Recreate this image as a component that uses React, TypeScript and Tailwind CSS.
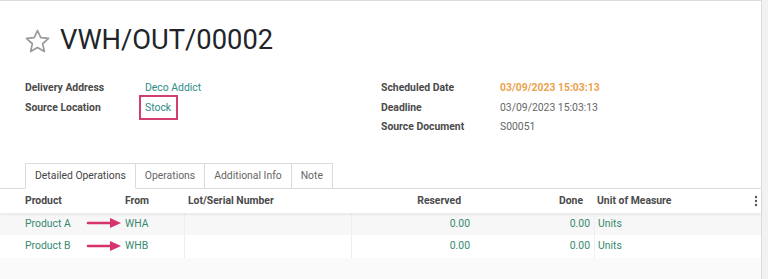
import React from "react";

const Arrow = () => (
  <svg
    className="absolute left-[-39px] top-1/2 -translate-y-1/2"
    width="36"
    height="12"
    viewBox="0 0 36 12"
  >
    <line x1="2" y1="6" x2="27" y2="6" stroke="#d6336c" strokeWidth="2.6" strokeLinecap="round" />
    <polygon points="24,1 35,6 24,11" fill="#d6336c" />
  </svg>
);

const Star = () => (
  <svg width="27" height="27" viewBox="0 0 24 24" className="mr-[9px]">
    <polygon
      points="12,2.2 14.9,8.6 21.8,9.3 16.6,14 18.1,20.9 12,17.4 5.9,20.9 7.4,14 2.2,9.3 9.1,8.6"
      fill="none"
      stroke="#9a9a9a"
      strokeWidth="1.5"
      strokeLinejoin="round"
    />
  </svg>
);

const cols = "grid-cols-[120px_65px_167px_123px_120px_1fr_10px]";

export default function App() {
  const font = { fontFamily: "Roboto, 'Noto Sans', sans-serif" };
  const rows = [
    { p: "Product A", f: "WHA", bg: "bg-[#f7f7f7]" },
    { p: "Product B", f: "WHB", bg: "bg-white" },
  ];
  return (
    <div className="flex h-[279px] w-[768px] bg-[#f2f2f2] overflow-hidden" style={font}>
      <div className="flex w-[762px] flex-col border-t border-r border-[#dcdcdc] bg-white">
        {/* Title */}
        <div className="flex h-[54px] items-center pl-[24px] pt-[26px]">
          <Star />
          <span className="text-[27.3px] leading-none text-[#212529]">VWH/OUT/00002</span>
        </div>

        {/* Fields */}
        <div className="mt-[23px] flex text-[10.4px] leading-[19.5px]">
          <div className="flex w-[381px] flex-col pl-[25px]">
            <div className="flex">
              <span className="w-[120px] font-bold text-[#4a4a4a]">Delivery Address</span>
              <span className="text-[#2b8c87]">Deco Addict</span>
            </div>
            <div className="flex">
              <span className="w-[120px] font-bold text-[#4a4a4a]">Source Location</span>
              <span className="relative text-[#2b8c87]">
                Stock
                <span className="absolute left-[-6px] top-[-3px] h-[25px] w-[39px] border-2 border-[#d23f73]" />
              </span>
            </div>
          </div>
          <div className="flex flex-col">
            <div className="flex">
              <span className="w-[119px] font-bold text-[#4a4a4a]">Scheduled Date</span>
              <span className="font-bold text-[#eaa24d]">03/09/2023 15:03:13</span>
            </div>
            <div className="flex">
              <span className="w-[119px] font-bold text-[#4a4a4a]">Deadline</span>
              <span className="text-[#666]">03/09/2023 15:03:13</span>
            </div>
            <div className="flex">
              <span className="w-[119px] font-bold text-[#4a4a4a]">Source Document</span>
              <span className="text-[#666]">S00051</span>
            </div>
          </div>
        </div>

        {/* Tabs */}
        <div className="mt-[26px] flex h-[26px] border-b border-[#dcdcdc] pl-[25px] text-[10.4px]">
          <div className="mb-[-1px] flex items-center border border-b-white border-[#dcdcdc] bg-white px-[9px] text-[#444]">
            Detailed Operations
          </div>
          <div className="flex items-center border-t border-r border-[#dcdcdc] px-[9px] text-[#666]">Operations</div>
          <div className="flex items-center border-t border-r border-[#dcdcdc] px-[9px] text-[#666]">Additional Info</div>
          <div className="flex items-center border-t border-r border-[#dcdcdc] px-[9px] text-[#666]">Note</div>
        </div>

        {/* Table */}
        <div className="flex flex-1 flex-col bg-[#fafafa] text-[10.4px]">
          <div className={`relative z-10 grid h-[24px] ${cols} items-center bg-white font-bold text-[#4a4a4a] shadow-[0_2px_3px_rgba(0,0,0,0.06)]`}>
            <span className="pl-[25px]">Product</span>
            <span className="pl-[5px]">From</span>
            <span className="pl-[3px]">Lot/Serial Number</span>
            <span className="pr-[14px] text-right">Reserved</span>
            <span className="pr-[12px] text-right">Done</span>
            <span className="pl-[2px]">Unit of Measure</span>
            <span className="flex justify-center">
              <svg width="4" height="12" viewBox="0 0 4 12">
                <circle cx="2" cy="2" r="1.2" fill="#555" />
                <circle cx="2" cy="6" r="1.2" fill="#555" />
                <circle cx="2" cy="10" r="1.2" fill="#555" />
              </svg>
            </span>
          </div>
          {rows.map((r) => (
            <div
              key={r.p}
              className={`grid h-[22.5px] ${cols} items-center text-[#38896f] ${r.bg}`}
            >
              <span className="pl-[25px]">{r.p}</span>
              <span className="relative h-full border-r border-[#efefef] pl-[5px] leading-[22.5px]">
                <span className="relative">
                  {r.f}
                  <Arrow />
                </span>
              </span>
              <span className="h-full border-r border-[#efefef]" />
              <span className="pr-[5px] text-right">0.00</span>
              <span className="flex h-full items-center justify-end border-r border-[#efefef] pr-[4px]">0.00</span>
              <span className="pl-[3px]">Units</span>
              <span />
            </div>
          ))}
        </div>
      </div>
    </div>
  );
}
